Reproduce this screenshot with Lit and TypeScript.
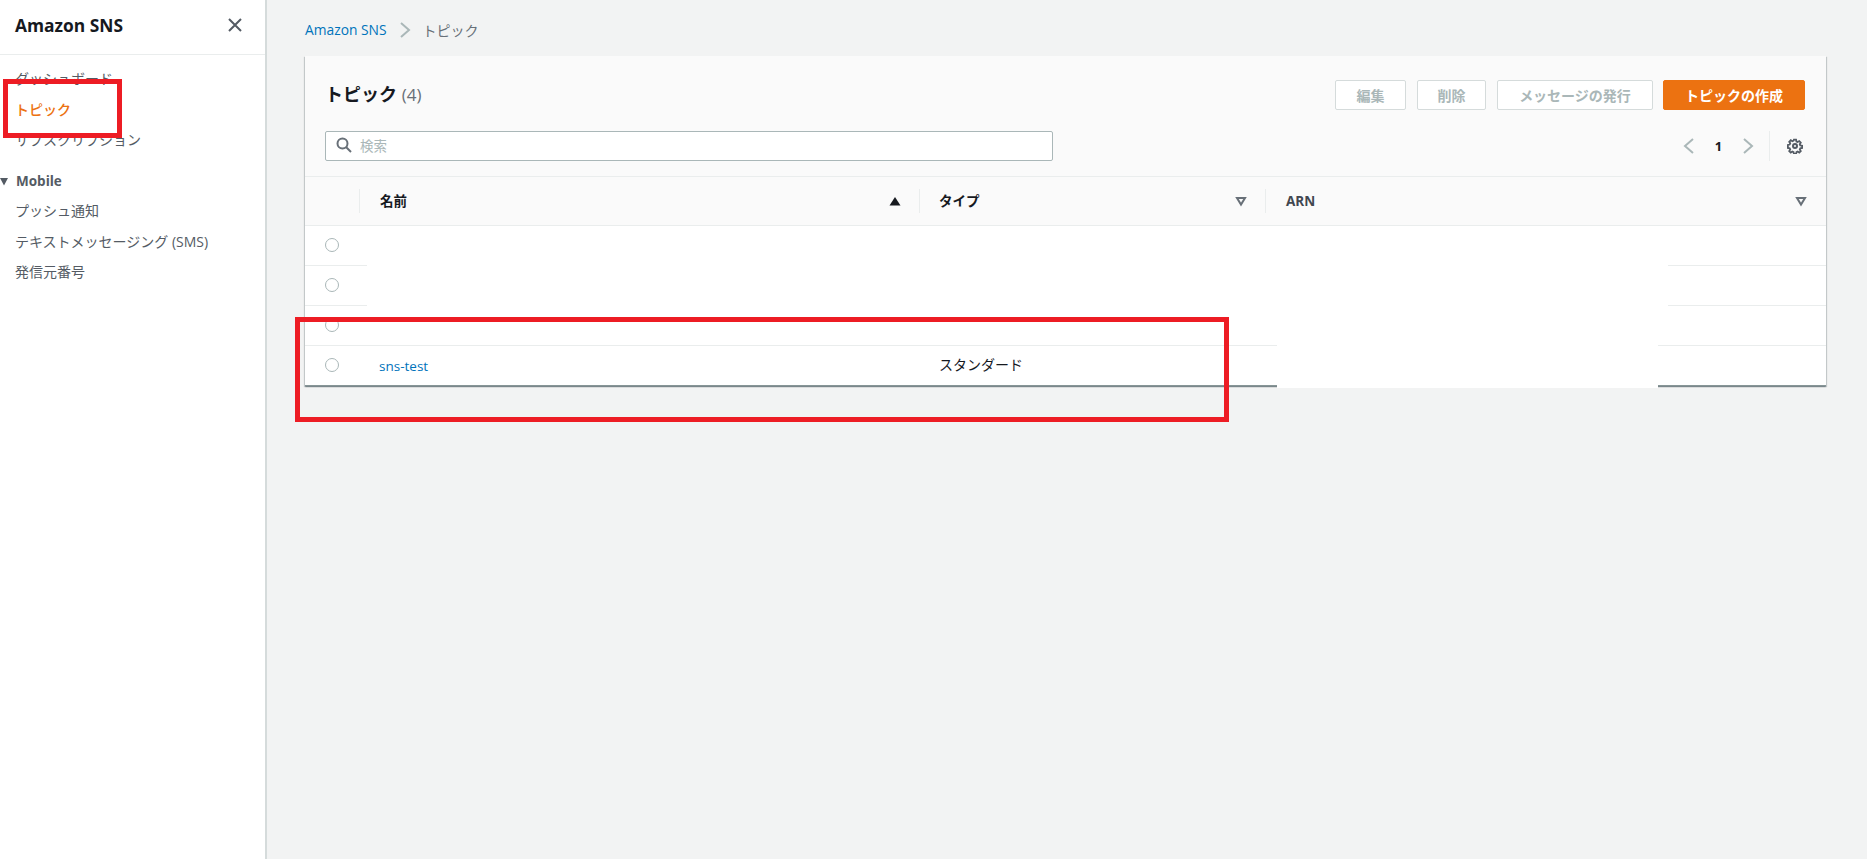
import { LitElement, html, css, svg } from "lit";
import { customElement } from "lit/decorators.js";

const filterIcon = svg`<svg class="ficon" width="12" height="12" viewBox="0 0 12 12"><path d="M2 3h8L6 9.5z" fill="none" stroke="#687078" stroke-width="2"/></svg>`;

@customElement("app-root")
export class AppRoot extends LitElement {
  static styles = css`
    :host {
      display: block;
      position: relative;
      height: 859px;
      overflow: hidden;
      font-family: "Open Sans", "Noto Sans CJK JP", sans-serif;
      font-size: 14px;
      color: #16191f;
      background: #f2f3f3;
    }
    .layout { display: flex; height: 100%; }
    .side {
      width: 265px;
      flex: none;
      background: #fff;
      border-right: 2px solid #d5dbdb;
      box-sizing: content-box;
    }
    .side-head {
      border-bottom: 1px solid #eaeded;
      display: flex;
      align-items: center;
      justify-content: space-between;
      padding: 0 22px 5px 15px;
      box-sizing: border-box;
      height: 55px;
    }
    .side-head b { font-size: 17.4px; font-weight: 700; color: #16191f; }
    .nav { list-style: none; margin: 0; padding: 9px 0 0 15px; color: #545b64; }
    .nav li { height: 30.5px; line-height: 30.5px; white-space: nowrap; }
    .nav .active { color: #ec7211; font-weight: 500; }
    .nav .group {
      margin-top: 10px;
      font-weight: 700;
      font-size: 13.5px;
      position: relative;
      padding-left: 1px;
    }
    .nav .group svg { position: absolute; left: -15px; top: 11px; }
    .main { flex: 1; padding: 0 40px 0 38px; min-width: 0; }
    .crumbs {
      height: 56px;
      display: flex;
      align-items: center;
      gap: 12px;
      padding-top: 3px;
      box-sizing: border-box;
      font-size: 14px;
      color: #687078;
    }
    .crumbs a { color: #0073bb; font-size: 13.8px; }
    .card {
      background: #fff;
      height: 330px;
      width: 1521px;
      box-shadow: 0 1px 1px 0 rgba(0, 28, 36, 0.3), 1px 1px 1px 0 rgba(0, 28, 36, 0.15), -1px 1px 1px 0 rgba(0, 28, 36, 0.15);
      border-bottom: 1px solid #879596;
      box-sizing: border-box;
    }
    .head {
      background: #fafafa;
      padding: 24px 21px 0 20px;
      height: 121px;
      box-sizing: border-box;
      border-bottom: 1px solid #eaeded;
    }
    .row1 { display: flex; align-items: center; justify-content: space-between; height: 30px; }
    h1 { margin: 0 0 4px; font-size: 18px; font-weight: 700; color: #16191f; }
    h1 span { font-weight: 400; color: #687078; font-size: 17px; }
    .btns { display: flex; gap: 11px; }
    .btn {
      height: 30px;
      box-sizing: border-box;
      border: 1px solid #d5dbdb;
      border-radius: 2px;
      background: #fff;
      color: #aab7b8;
      font-weight: 700;
      font-size: 14px;
      display: flex;
      align-items: center;
      justify-content: center;
    }
    .btn.edit { width: 71px; }
    .btn.del { width: 69px; }
    .btn.pub { width: 156px; }
    .btn.primary { width: 142px; margin-left: -1px; background: #ec7211; border-color: #ec7211; color: #fff; }
    .row2 { display: flex; align-items: center; justify-content: space-between; margin-top: 21px; height: 30px; }
    .search {
      width: 728px;
      height: 30px;
      box-sizing: border-box;
      border: 1px solid #aab7b8;
      border-radius: 2px;
      background: #fff;
      display: flex;
      align-items: center;
      gap: 8px;
      padding: 0 0 2px 10px;
      color: #aab7b8;
      font-size: 13.5px;
    }
    .pager { display: flex; align-items: center; height: 30px; padding-right: 2px; color: #16191f; font-weight: 700; font-size: 13px; }
    .pager .num { width: 47px; text-align: center; }
    .pager .sep { width: 1px; height: 30px; background: #eaeded; margin: 0 17px 0 15px; }
    .grid { display: grid; grid-template-columns: 54px 560px 346px 1fr; }
    .th {
      height: 49px;
      background: #fafafa;
      border-bottom: 1px solid #eaeded;
      box-sizing: border-box;
      display: flex;
      align-items: center;
      justify-content: space-between;
      font-weight: 700;
      font-size: 13.5px;
      position: relative;
      padding: 0 18px 0 21px;
    }
    .th span { margin-bottom: 2px; }
    .th.sel { padding: 0; }
    .th.type { padding-left: 20px; }
    .th.arn { color: #414750; padding-right: 19px; }
    .th.arn span { margin-bottom: 0; }
    .th::before {
      content: "";
      position: absolute;
      left: 0;
      top: 12px;
      bottom: 12px;
      width: 1px;
      background: #eaeded;
    }
    .th.sel::before { display: none; }
    .td {
      height: 40px;
      box-sizing: border-box;
      border-bottom: 1px solid #eaeded;
      display: flex;
      align-items: center;
      padding-left: 20px;
      white-space: nowrap;
    }
    .td.radio { padding-bottom: 2px; }
    .td.type { padding-bottom: 4px; }
    .td.last { border-bottom: none; }
    .td.link { color: #0073bb; font-size: 13.5px; }
    .radio i {
      display: block;
      width: 14px;
      height: 14px;
      box-sizing: border-box;
      border: 1px solid #aab7b8;
      border-radius: 50%;
      background: #fff;
    }
    .mask { position: absolute; background: #fff; }
    .mask.a { left: 367px; top: 227px; width: 1301px; height: 115px; }
    .mask.b { left: 1277px; top: 342px; width: 381px; height: 46px; }
    .red { position: absolute; border: 5px solid #ed1c24; box-sizing: border-box; }
    .red.a { left: 3px; top: 79px; width: 119px; height: 59px; }
    .red.b { left: 295px; top: 317px; width: 934px; height: 105px; }
  `;

  render() {
    const rows = [0, 1, 2];
    return html`
      <div class="layout">
        <aside class="side">
          <div class="side-head">
            <b>Amazon SNS</b>
            <svg width="16" height="16" viewBox="0 0 16 16"><path d="M2 2l12 12M14 2L2 14" stroke="#545b64" stroke-width="2" fill="none"/></svg>
          </div>
          <ul class="nav">
            <li>ダッシュボード</li>
            <li class="active">トピック</li>
            <li>サブスクリプション</li>
            <li class="group"><svg width="9" height="9" viewBox="0 0 9 9"><path d="M0 1h8L4 8.5z" fill="#545b64"/></svg>Mobile</li>
            <li>プッシュ通知</li>
            <li>テキストメッセージング (SMS)</li>
            <li>発信元番号</li>
          </ul>
        </aside>
        <main class="main">
          <nav class="crumbs">
            <a>Amazon SNS</a>
            <svg width="12" height="16" viewBox="0 0 12 16"><path d="M2 1l8 7-8 7" fill="none" stroke="#aab7b8" stroke-width="2"/></svg>
            <span>トピック</span>
          </nav>
          <section class="card">
            <div class="head">
              <div class="row1">
                <h1>トピック <span>(4)</span></h1>
                <div class="btns">
                  <div class="btn edit">編集</div>
                  <div class="btn del">削除</div>
                  <div class="btn pub">メッセージの発行</div>
                  <div class="btn primary">トピックの作成</div>
                </div>
              </div>
              <div class="row2">
                <div class="search">
                  <svg width="16" height="16" viewBox="0 0 16 16"><circle cx="6.5" cy="6.5" r="5" fill="none" stroke="#687078" stroke-width="2"/><path d="M10 10l5 5" stroke="#687078" stroke-width="2"/></svg>
                  <span>検索</span>
                </div>
                <div class="pager">
                  <svg width="12" height="16" viewBox="0 0 12 16"><path d="M10 1l-8 7 8 7" fill="none" stroke="#aab7b8" stroke-width="2"/></svg>
                  <span class="num">1</span>
                  <svg width="12" height="16" viewBox="0 0 12 16"><path d="M2 1l8 7-8 7" fill="none" stroke="#aab7b8" stroke-width="2"/></svg>
                  <span class="sep"></span>
                  <svg width="16" height="16" viewBox="0 0 16 16"><path d="M6.8 1h2.4l.4 2 1.3.6 1.8-1.1 1.7 1.7-1.1 1.8.6 1.3 2 .4v2.4l-2 .4-.6 1.3 1.1 1.8-1.7 1.7-1.8-1.1-1.3.6-.4 2H6.8l-.4-2-1.3-.6-1.8 1.1-1.7-1.7 1.1-1.8-.6-1.3-2-.4V6.8l2-.4.6-1.3-1.1-1.8 1.7-1.7 1.8 1.1 1.3-.6z" fill="none" stroke="#545b64" stroke-width="2" transform="translate(.8 .8) scale(.9)"/><circle cx="8" cy="8" r="2" fill="none" stroke="#545b64" stroke-width="2"/></svg>
                </div>
              </div>
            </div>
            <div class="grid">
              <div class="th sel"></div>
              <div class="th"><span>名前</span><svg width="12" height="12" viewBox="0 0 12 12"><path d="M0.5 10.5h11L6 2z" fill="#16191f"/></svg></div>
              <div class="th type"><span>タイプ</span>${filterIcon}</div>
              <div class="th arn"><span>ARN</span>${filterIcon}</div>
              ${rows.map(
                () => html`
                  <div class="td radio"><i></i></div>
                  <div class="td"></div>
                  <div class="td"></div>
                  <div class="td"></div>
                `
              )}
              <div class="td radio last"><i></i></div>
              <div class="td last link">sns-test</div>
              <div class="td last type">スタンダード</div>
              <div class="td last"></div>
            </div>
          </section>
        </main>
      </div>
      <div class="mask a"></div>
      <div class="mask b"></div>
      <div class="red a"></div>
      <div class="red b"></div>
    `;
  }
}
